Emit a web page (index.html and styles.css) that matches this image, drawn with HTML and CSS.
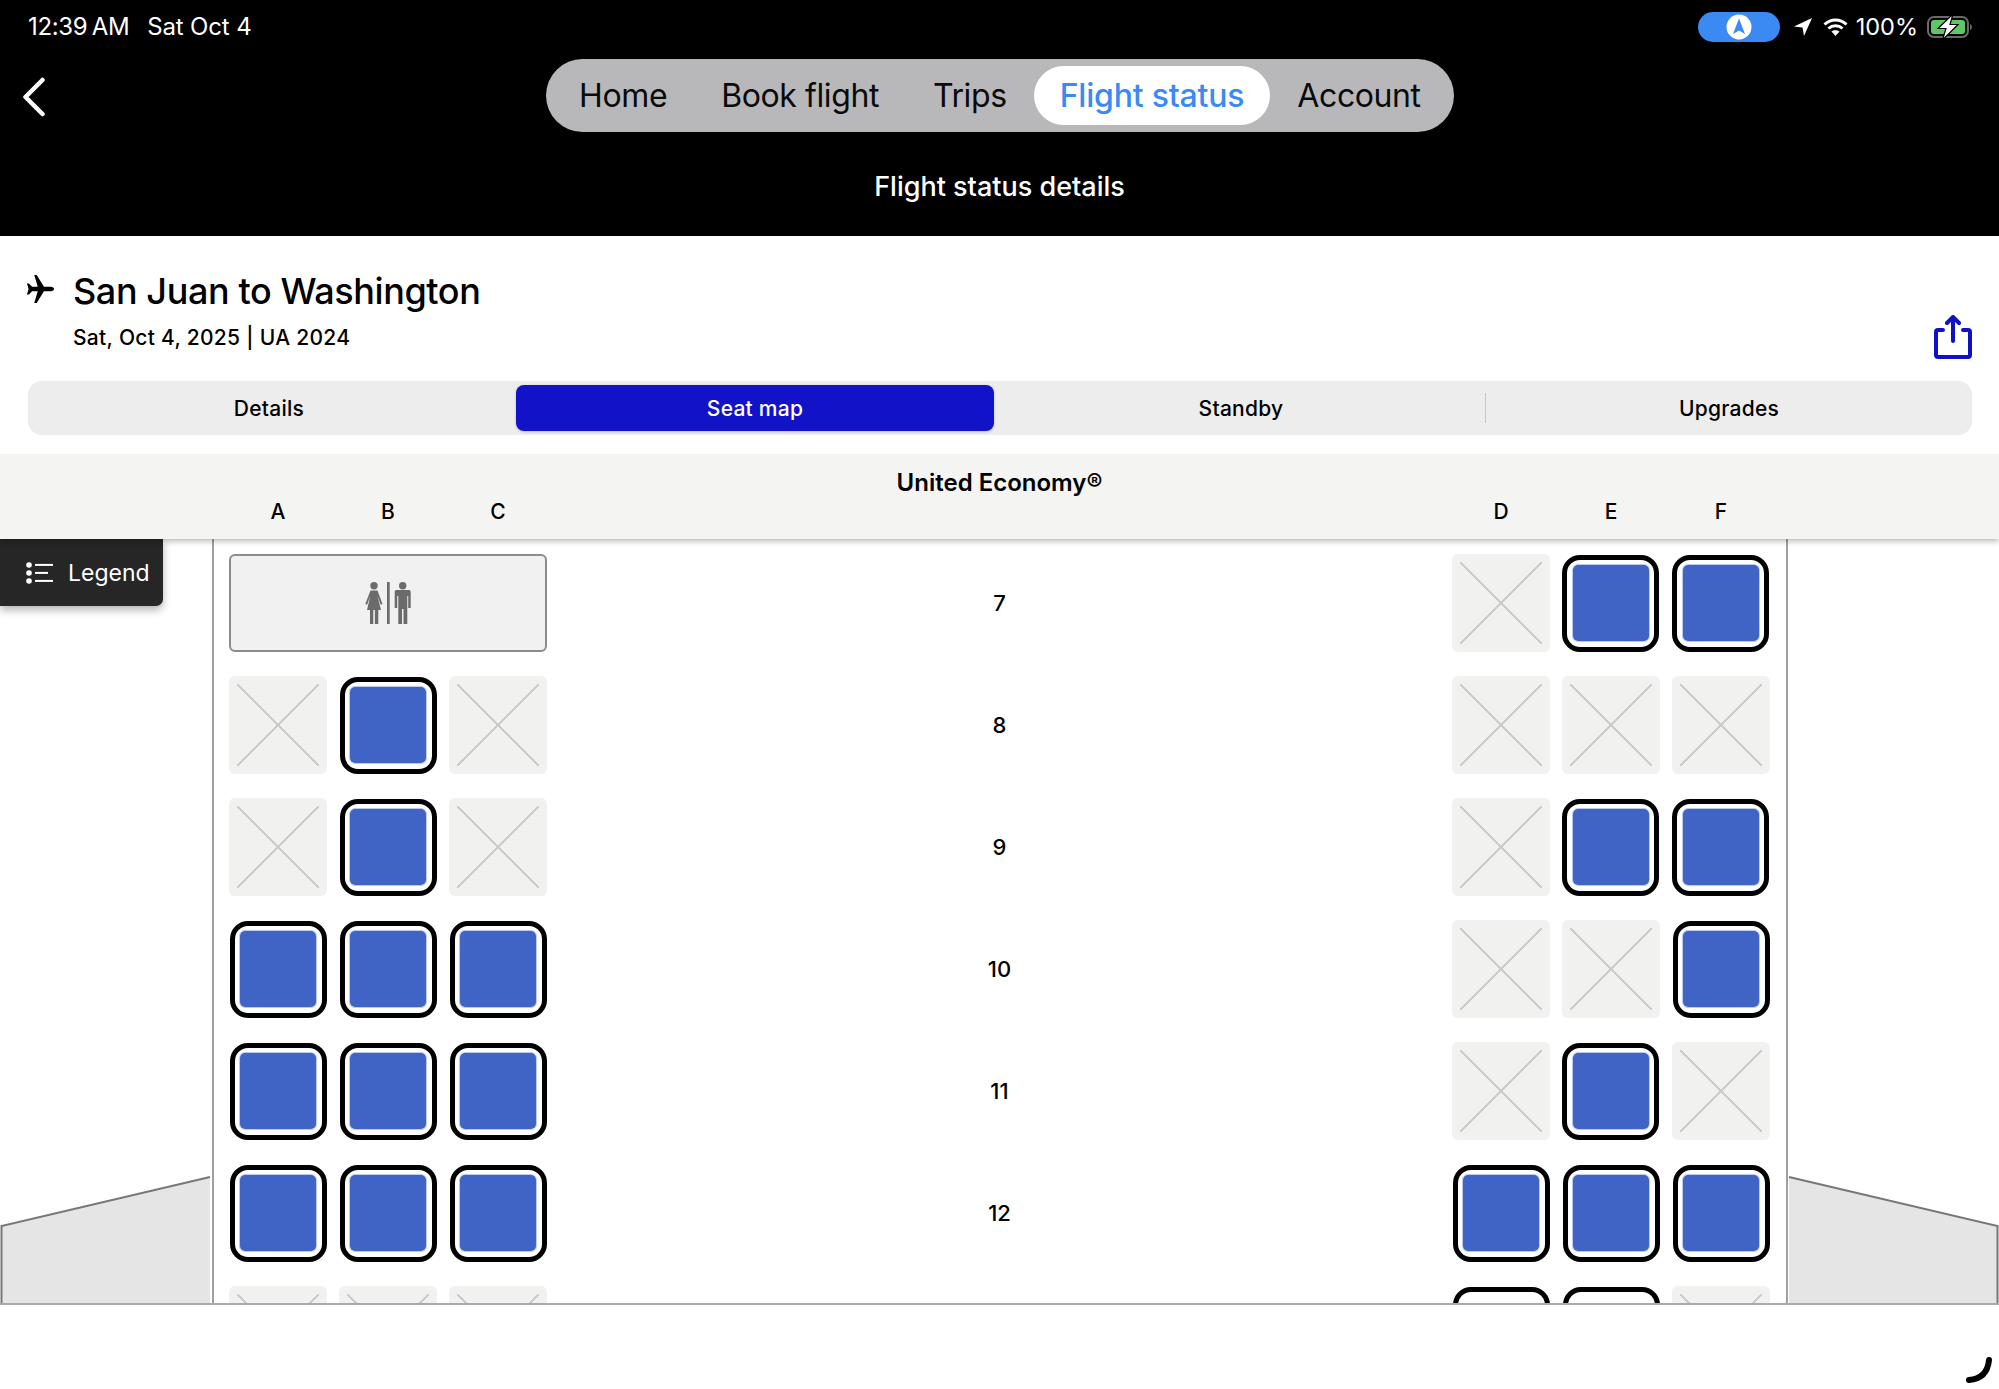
FILE: index.html
```html
<!DOCTYPE html>
<html lang="en">
<head>
<meta charset="utf-8">
<title>Flight status details</title>
<link rel="stylesheet" href="styles.css">
</head>
<body>
<header class="top">
  <div class="status">
    <div class="status-left"><span class="clock">12:39 AM</span><span>Sat Oct 4</span></div>
    <div class="status-right">
      <span class="nav-pill"><svg width="26" height="26" viewBox="0 0 26 26"><circle cx="13" cy="13" r="12.500" fill="#fff"/><path d="M13 4.500 19 20l-6-3.500L7 20z" fill="#3b8af3"/></svg></span>
      <svg class="ic-loc" width="18" height="18" viewBox="0 0 18 18"><path d="M18 0 0 8.500l8.500 1L10 18z" fill="#fff"/></svg>
      <svg class="ic-wifi" width="25" height="18" viewBox="0 0 25 18"><path d="M1.500 6.500c6.500-6 15.500-6 22 0M5.500 10.500c4-3.600 10-3.600 14 0" fill="none" stroke="#fff" stroke-width="3"/><path d="M8.500 13.500c2.300-1.800 5.700-1.800 8 0l-4 4.500z" fill="#fff"/></svg>
      <span class="pct">100%</span>
      <svg class="ic-batt" width="46" height="26" viewBox="0 0 46 26"><rect x="1" y="3" width="40" height="20" rx="6" fill="none" stroke="#6a6a6a" stroke-width="2"/><rect x="4" y="6" width="34" height="14" rx="3" fill="#5dc765"/><path d="M43 10c2.500.5 2.500 5.500 0 6z" fill="#6a6a6a"/><path d="M26 0 11 14.500h8L15.500 26 31 10.500h-8z" fill="#fff" stroke="#000" stroke-width="1.200"/></svg>
    </div>
  </div>
  <div class="nav-row">
    <svg class="back" width="24" height="40" viewBox="0 0 24 40"><path d="M20.500 3 3.500 20l17 17" fill="none" stroke="#fff" stroke-width="4.500" stroke-linecap="round" stroke-linejoin="round"/></svg>
    <nav class="tabs">
      <span class="tab">Home</span>
      <span class="tab">Book flight</span>
      <span class="tab">Trips</span>
      <span class="tab tab-on">Flight status</span>
      <span class="tab">Account</span>
    </nav>
  </div>
  <div class="page-title">Flight status details</div>
</header>

<main class="content">
  <section class="flight">
    <svg class="ic-plane" width="28" height="28" viewBox="0 0 30 30"><path d="M30 15c0-1.400-1.600-2.400-3.200-2.400h-7.600L11.500 0H8.800l3.800 12.600H6.500L3.200 9H1l1.800 6L1 21h2.200l3.300-3.600h6.100L8.800 30h2.700l7.700-12.600h7.600c1.600 0 3.200-1 3.200-2.400z" fill="#000"/></svg>
    <div class="flight-text">
      <h1>San Juan to Washington</h1>
      <p>Sat, Oct 4, 2025 | UA 2024</p>
    </div>
    <svg class="ic-share" width="38" height="44" viewBox="0 0 38 44"><path d="M9 15H4a2 2 0 0 0-2 2v23a2 2 0 0 0 2 2h30a2 2 0 0 0 2-2V17a2 2 0 0 0-2-2h-5M19 26V3M13 8l6-6 6 6" fill="none" stroke="#1010c8" stroke-width="4" stroke-linecap="round" stroke-linejoin="round"/></svg>
  </section>

  <div class="segments">
    <span class="seg">Details</span>
    <span class="seg seg-on">Seat map</span>
    <span class="seg seg-mid">Standby</span>
    <span class="seg seg-line">Upgrades</span>
  </div>

  <section class="map">
    <div class="cabin-head">
      <div class="cabin-name">United Economy®</div>
      <div class="letters">
        <div class="trio"><span>A</span><span>B</span><span>C</span></div>
        <div class="trio"><span>D</span><span>E</span><span>F</span></div>
      </div>
    </div>
    <button class="legend">
      <svg width="28" height="24" viewBox="0 0 28 24"><g fill="#fff"><circle cx="3" cy="4" r="2.800"/><circle cx="3" cy="12" r="2.800"/><circle cx="3" cy="20" r="2.800"/><rect x="9" y="2.900" width="18" height="2"/><rect x="9" y="10.900" width="13" height="2"/><rect x="9" y="18.900" width="18" height="2"/></g></svg>
      <span>Legend</span>
    </button>
    <svg class="wing wing-l" width="212" height="127" viewBox="0 0 212 127"><path d="M2 127V50L210 1v126z" fill="#e5e5e5"/><path d="M1.500 127V50L210 1" fill="none" stroke="#777" stroke-width="2"/></svg>
    <svg class="wing wing-r" width="212" height="127" viewBox="0 0 212 127"><path d="M210 127V50L2 1v126z" fill="#e5e5e5"/><path d="M210.500 127V50L2 1" fill="none" stroke="#777" stroke-width="2"/></svg>
    <div class="fuselage">
      <div class="row">
        <div class="trio"><div class="lav"><svg width="46" height="42" viewBox="0 0 46 42"><g fill="#6b6b6b"><circle cx="9" cy="3.700" r="3.700"/><path d="M5.500 8.500h7l5 13.500-1.800.7L12.500 14l3.500 14h-2.700v14H9.900V28H8.300v14H5V28H2l3.300-14-3.200 8.700L.3 22z"/><rect x="22" y="0" width="2.700" height="42"/><circle cx="37.700" cy="3.700" r="3.700"/><path d="M31.500 8H44a1.700 1.700 0 0 1 1.700 1.700V26h-2.500V14h-.9v28h-3.800V27H37v15h-3.700V14h-1.100v12h-2.500V9.700A1.700 1.700 0 0 1 31.500 8z"/></g></svg></div></div>
        <div class="num">7</div>
        <div class="trio"><div class="seat x"></div><div class="seat on"></div><div class="seat on"></div></div>
      </div>
      <div class="row">
        <div class="trio"><div class="seat x"></div><div class="seat on"></div><div class="seat x"></div></div>
        <div class="num">8</div>
        <div class="trio"><div class="seat x"></div><div class="seat x"></div><div class="seat x"></div></div>
      </div>
      <div class="row">
        <div class="trio"><div class="seat x"></div><div class="seat on"></div><div class="seat x"></div></div>
        <div class="num">9</div>
        <div class="trio"><div class="seat x"></div><div class="seat on"></div><div class="seat on"></div></div>
      </div>
      <div class="row">
        <div class="trio"><div class="seat on"></div><div class="seat on"></div><div class="seat on"></div></div>
        <div class="num">10</div>
        <div class="trio"><div class="seat x"></div><div class="seat x"></div><div class="seat on"></div></div>
      </div>
      <div class="row">
        <div class="trio"><div class="seat on"></div><div class="seat on"></div><div class="seat on"></div></div>
        <div class="num">11</div>
        <div class="trio"><div class="seat x"></div><div class="seat on"></div><div class="seat x"></div></div>
      </div>
      <div class="row">
        <div class="trio"><div class="seat on"></div><div class="seat on"></div><div class="seat on"></div></div>
        <div class="num">12</div>
        <div class="trio"><div class="seat on"></div><div class="seat on"></div><div class="seat on"></div></div>
      </div>
      <div class="row">
        <div class="trio"><div class="seat x"></div><div class="seat x"></div><div class="seat x"></div></div>
        <div class="num"></div>
        <div class="trio"><div class="seat open"></div><div class="seat open"></div><div class="seat x"></div></div>
      </div>
    </div>
  </section>
  <footer class="foot">
    <svg class="spin" width="32" height="30" viewBox="0 0 32 30"><path d="M26 3c-1 10-6 19-20 20" fill="none" stroke="#000" stroke-width="6" stroke-linecap="round"/></svg>
  </footer>
</main>
</body>
</html>
```
FILE: styles.css
```css
* { box-sizing: border-box; }
html, body { margin: 0; padding: 0; background: #fff; }
body { width: 1999px; height: 1389px; overflow: hidden; font-family: Inter, "Liberation Sans", sans-serif; color: #000; }

.top { background: #000; height: 236px; display: flex; flex-direction: column; color: #fff; }
.status { height: 54px; padding: 12px 26px 0 28px; display: flex; justify-content: space-between; align-items: flex-start; font-size: 24px; }
.status-left { display: flex; gap: 18px; line-height: 30px; letter-spacing: -.15px; white-space: nowrap; }
.clock { letter-spacing: -.35px; word-spacing: -2px; }
.status-right { display: flex; align-items: center; height: 30px; }
.nav-pill { width: 82px; height: 30px; border-radius: 15px; background: #3b8af3; display: flex; align-items: center; justify-content: center; }
.ic-loc { margin-left: 14px; }
.ic-wifi { margin-left: 11px; }
.pct { line-height: 30px; margin-left: 8px; font-size: 23.500px; white-space: nowrap; }
.ic-batt { margin-left: 9px; }
.nav-row { position: relative; height: 78px; display: flex; justify-content: center; align-items: flex-start; flex: none; margin-top: 5px; }
.back { position: absolute; left: 22px; top: 18px; }
.tabs { display: flex; align-items: center; height: 73px; width: 908px; padding: 0 0 0 6.600px; border-radius: 37px; background: #b8b8bb; color: #0a0a0a; font-size: 32px; letter-spacing: -.4px; }
.tab { padding: 0 27px; line-height: 59px; height: 59px; border-radius: 30px; white-space: nowrap; }
.tab-on { padding: 0 26px; background: #fff; color: #3b8af3; font-weight: 500; letter-spacing: -.2px; }
.page-title { text-align: center; font-size: 27px; font-weight: 500; line-height: 34px; margin-top: 33px; }

.content { display: flex; flex-direction: column; height: 1153px; }
.flight { display: flex; align-items: flex-start; padding: 32px 27px 0 26px; height: 145px; }
.ic-plane { flex: none; margin-top: 7px; }
.flight-text { flex: 1; margin-left: 19px; }
.flight-text h1 { margin: 0; font-size: 36px; font-weight: 550; line-height: 46px; letter-spacing: -.4px; }
.flight-text p { margin: 11px 0 0; font-size: 21px; font-weight: 550; line-height: 26px; letter-spacing: .3px; }
.ic-share { flex: none; margin-top: 47px; }

.segments { margin: 0 27px 0 28px; height: 54px; background: #ededed; border-radius: 14px; display: grid; grid-template-columns: 482px 484px 492px 486px; padding: 4px 0; flex: none; }
.seg { display: flex; align-items: center; justify-content: center; font-size: 21px; font-weight: 550; letter-spacing: .25px; border-radius: 8px; position: relative; }
.seg-on { margin-left: 6px; background: #1212c8; color: #fff; box-shadow: 0 1px 3px rgba(0,0,0,.2); }
.seg-mid { padding-left: 2px; }
.seg-line::before { content: ""; position: absolute; left: -1px; top: 8px; bottom: 8px; width: 1px; background: #c8c8c8; }

.map { position: relative; margin-top: 19px; height: 851px; overflow: hidden; border-bottom: 2px solid #aaa; flex: none; }
.cabin-head { position: relative; z-index: 3; height: 85px; background: #f4f4f2; box-shadow: 0 2px 6px rgba(0,0,0,.3); padding-top: 15px; }
.cabin-name { text-align: center; font-size: 24px; font-weight: 600; line-height: 28px; }
.letters { display: flex; justify-content: space-between; padding: 0 229px; margin-top: 2px; font-size: 21px; font-weight: 550; line-height: 26px; }
.trio { display: flex; gap: 12px; width: 318px; }
.letters .trio span { width: 98px; text-align: center; }

.legend { position: absolute; z-index: 2; left: 0; top: 85px; width: 163px; height: 67px; border: 0; border-radius: 0 0 7px 0; background: #262626; color: #fff; display: flex; align-items: center; gap: 14px; padding: 0 0 0 26px; font: 23px Inter, "Liberation Sans", sans-serif; box-shadow: 0 4px 8px rgba(0,0,0,.3); }
.wing { position: absolute; bottom: 0; }
.wing-l { left: 0; }
.wing-r { right: 0; }

.fuselage { margin: 0 211px 0 212px; height: 764px; border: solid #a0a0a0; border-width: 0 2px; padding: 15px 16px 0 15px; display: flex; flex-direction: column; gap: 24px; overflow: hidden; }
.row { display: flex; justify-content: space-between; align-items: center; height: 98px; flex: none; }
.num { font-size: 22px; font-weight: 550; }
.seat { width: 98px; height: 98px; flex: none; border-radius: 6px; }
.seat.x { background-color: #f1f1f0; background-image: linear-gradient(to top right, transparent calc(50% - 1.300px), #cccccc calc(50% - 1.300px), #cccccc calc(50% + 1.300px), transparent calc(50% + 1.300px)), linear-gradient(to bottom right, transparent calc(50% - 1.300px), #cccccc calc(50% - 1.300px), #cccccc calc(50% + 1.300px), transparent calc(50% + 1.300px)); background-size: 82px 82px; background-position: center; background-repeat: no-repeat; }
.seat.on, .seat.open { width: 97px; height: 97px; margin: .5px; border: 5.500px solid #000; border-radius: 18px; background: #fff; padding: 5.500px; }
.seat.on::after { content: ""; display: block; height: 100%; border-radius: 5px; background: #3f64c6; outline: 1px solid rgba(63,100,198,.35); }
.lav { width: 100%; height: 98px; background: #f1f1f1; border: 2px solid #8c8c8c; border-radius: 6px; display: flex; align-items: center; justify-content: center; }

.foot { flex: 1; position: relative; }
.spin { position: absolute; right: 4px; top: 52px; }
```
